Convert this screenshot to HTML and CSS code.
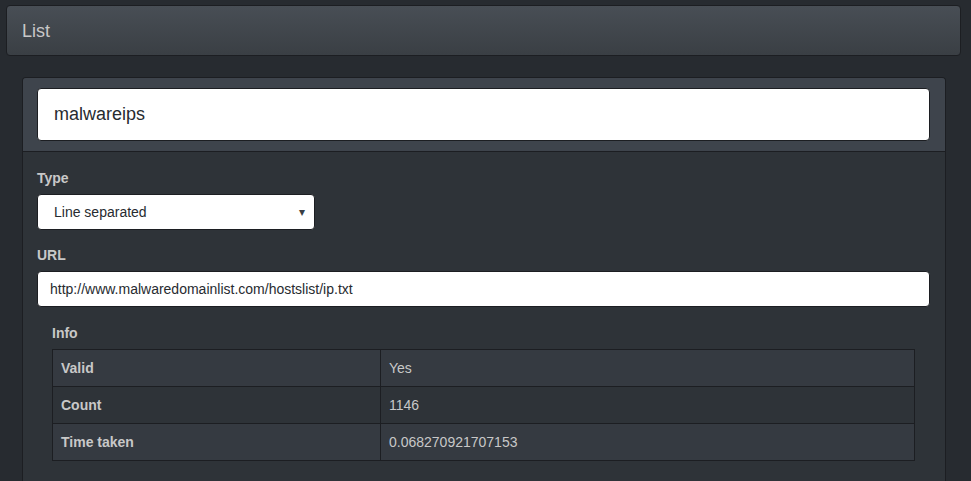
FILE: index.html
```html
<!DOCTYPE html>
<html>
<head>
<meta charset="utf-8">
<link rel="stylesheet" href="styles.css">
</head>
<body>
<div class="page">
  <div class="topbar"><span class="title">List</span></div>
  <div class="wrap">
    <div class="panel">
      <div class="panel-heading">
        <div class="name-input">malwareips</div>
      </div>
      <div class="panel-body">
        <div class="label">Type</div>
        <div class="select"><span>Line separated</span><span class="caret">▾</span></div>
        <div class="label gap">URL</div>
        <div class="url-input">http://www.malwaredomainlist.com/hostslist/ip.txt</div>
        <div class="info">
          <div class="label">Info</div>
          <table class="table">
            <tr class="odd"><th>Valid</th><td>Yes</td></tr>
            <tr><th>Count</th><td>1146</td></tr>
            <tr class="odd"><th>Time taken</th><td>0.068270921707153</td></tr>
          </table>
        </div>
      </div>
    </div>
  </div>
</div>
</body>
</html>
```
FILE: styles.css
```css
html, body {
  margin: 0;
  padding: 0;
  background: #272b30;
  height: 100%;
  overflow: hidden;
}
body {
  font-family: "Liberation Sans", Arial, sans-serif;
  font-size: 14px;
  color: #c8c8c8;
}
.page {
  padding: 5px 10px 0 6px;
}
.topbar {
  height: 49px;
  border: 1px solid #1c1e22;
  border-radius: 4px;
  background: linear-gradient(#484e55, #3a3f44);
  display: flex;
  align-items: center;
  padding-left: 15px;
}
.title {
  font-size: 18px;
  color: #c8c8c8;
  margin-top: 1px;
}
.wrap {
  padding: 21px 15px 0 16px;
}
.panel {
  border: 1px solid #1c1e22;
  border-bottom: none;
  border-radius: 4px 4px 0 0;
  background: #2e3338;
  height: 420px;
}
.panel-heading {
  background: #3e444c;
  border-bottom: 1px solid #1c1e22;
  padding: 10px 15px 10px 14px;
  border-radius: 3px 3px 0 0;
}
.name-input {
  height: 51px;
  background: #fff;
  border: 1px solid #1c1e22;
  border-radius: 4px;
  display: flex;
  align-items: center;
  padding-left: 16px;
  font-size: 18px;
  color: #272b30;
}
.panel-body {
  padding: 16px 15px 0 14px;
}
.label {
  font-weight: bold;
  line-height: 20px;
  margin-bottom: 6px;
}
.label.gap {
  margin-top: 15px;
}
.select {
  height: 34px;
  background: #fff;
  border: 1px solid #1c1e22;
  border-radius: 4px;
  display: flex;
  align-items: center;
  justify-content: space-between;
  padding: 0 9px 0 16px;
  box-sizing: content-box;
  width: 251px;
  color: #272b30;
}
.caret {
  font-size: 12px;
  color: #3a3f44;
}
.url-input {
  height: 34px;
  background: #fff;
  border: 1px solid #1c1e22;
  border-radius: 4px;
  display: flex;
  align-items: center;
  padding-left: 12px;
  color: #272b30;
}
.info {
  margin: 16px 15px 0 15px;
}
.table {
  width: 100%;
  border-collapse: collapse;
  border: 1px solid #1c1e22;
}
.table th, .table td {
  border: 1px solid #1c1e22;
  padding: 8px;
  line-height: 20px;
  text-align: left;
  height: 20px;
}
.table th {
  width: 311px;
  font-weight: bold;
}
.table tr.odd {
  background: #353a41;
}
```
